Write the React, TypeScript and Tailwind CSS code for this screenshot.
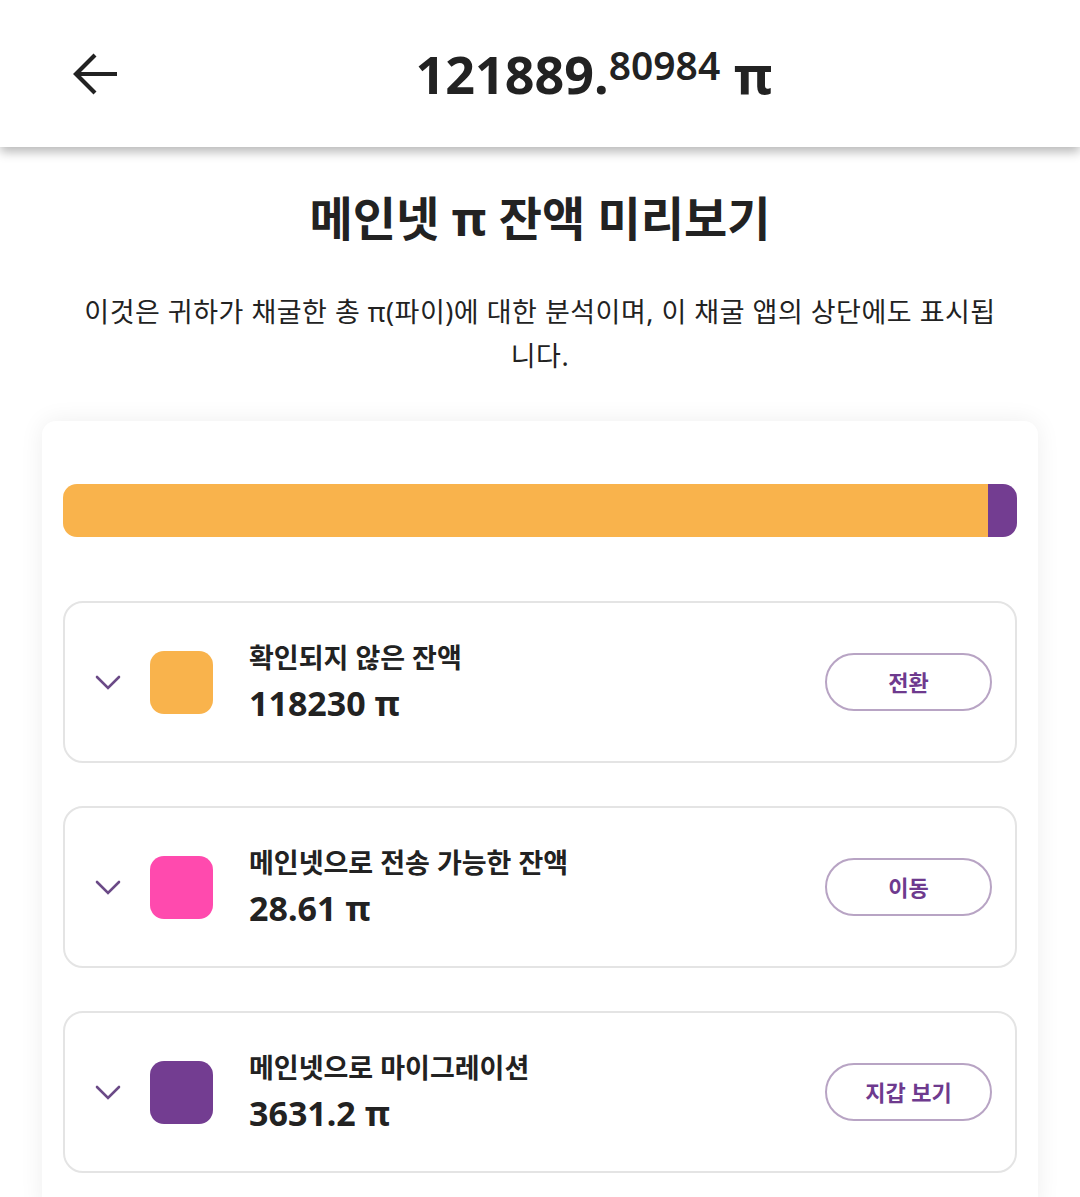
import React from 'react';

interface BalanceRow {
  id: string;
  label: string;
  amount: string;
  color: string;
  action: string;
}

const rows: BalanceRow[] = [
  { id: 'unverified', label: '확인되지 않은 잔액', amount: '118230 π', color: 'bg-[#f9b34c]', action: '전환' },
  { id: 'transferable', label: '메인넷으로 전송 가능한 잔액', amount: '28.61 π', color: 'bg-[#ff4aae]', action: '이동' },
  { id: 'migrated', label: '메인넷으로 마이그레이션', amount: '3631.2 π', color: 'bg-[#733d91]', action: '지갑 보기' },
];

const BackArrow = () => (
  <svg width="48" height="42" viewBox="0 0 48 42" fill="none" stroke="#222" strokeWidth="4.2">
    <path d="M46 21H6" />
    <path d="M24 2L5 21L24 40" />
  </svg>
);

const Chevron = () => (
  <svg width="26" height="16" viewBox="0 0 26 16" fill="none" stroke="#6b4a87" strokeWidth="2.6" strokeLinecap="round">
    <path d="M2 3L13 14L24 3" />
  </svg>
);

const Row: React.FC<{ row: BalanceRow }> = ({ row }) => (
  <div className="h-[162px] flex items-center border-[2.5px] border-[#e4e4e4] rounded-[20px] pl-[30px] pr-[23px]">
    <Chevron />
    <div className={`w-[63px] h-[63px] rounded-[14px] ml-[29px] shrink-0 ${row.color}`} />
    <div className="ml-[36px] flex flex-col gap-[7px]">
      <p className="text-[27px] leading-[34px] font-semibold text-[#222]">{row.label}</p>
      <p className="text-[34px] leading-[42px] font-bold text-[#222]">{row.amount}</p>
    </div>
    <button className="ml-auto w-[167px] h-[58px] rounded-full border-2 border-[#b8a4c4] text-[22px] font-bold text-[#6e3a8e]">
      {row.action}
    </button>
  </div>
);

export default function App() {
  return (
    <div className="min-h-screen bg-white font-['Noto_Sans','Noto_Sans_CJK_KR',sans-serif] text-[#222]">
      <header className="h-[147px] bg-white flex items-center pl-[71px] pr-[11px] shadow-[0_5px_10px_rgba(0,0,0,0.28)] relative z-10">
        <BackArrow />
        <div className="flex-1 text-center whitespace-nowrap font-bold">
          <span className="text-[52px]">121889.</span>
          <span className="text-[39px] font-semibold align-[14px]">80984</span>
          <span className="text-[52px]"> π</span>
        </div>
      </header>

      <h1 className="mt-[41px] text-center text-[47px] leading-[60px] font-bold">메인넷 π 잔액 미리보기</h1>
      <p className="mt-[42px] mx-auto max-w-[930px] text-center text-[27px] leading-[44px] tracking-[0.5px] text-[#222]">
        이것은 귀하가 채굴한 총 π(파이)에 대한 분석이며, 이 채굴 앱의 상단에도 표시됩니다.
      </p>

      <div className="mt-[43px] mx-[42px] bg-white rounded-[14px] shadow-[0_0_24px_rgba(0,0,0,0.07)] px-[21px] pt-[63px] pb-[40px]">
        <div className="h-[53px] rounded-[14px] overflow-hidden flex">
          <div className="flex-1 bg-[#f9b34c]" />
          <div className="w-[29px] bg-[#733d91]" />
        </div>
        <div className="mt-[64px] flex flex-col gap-[43px]">
          {rows.map((r) => (
            <Row key={r.id} row={r} />
          ))}
        </div>
      </div>
    </div>
  );
}
